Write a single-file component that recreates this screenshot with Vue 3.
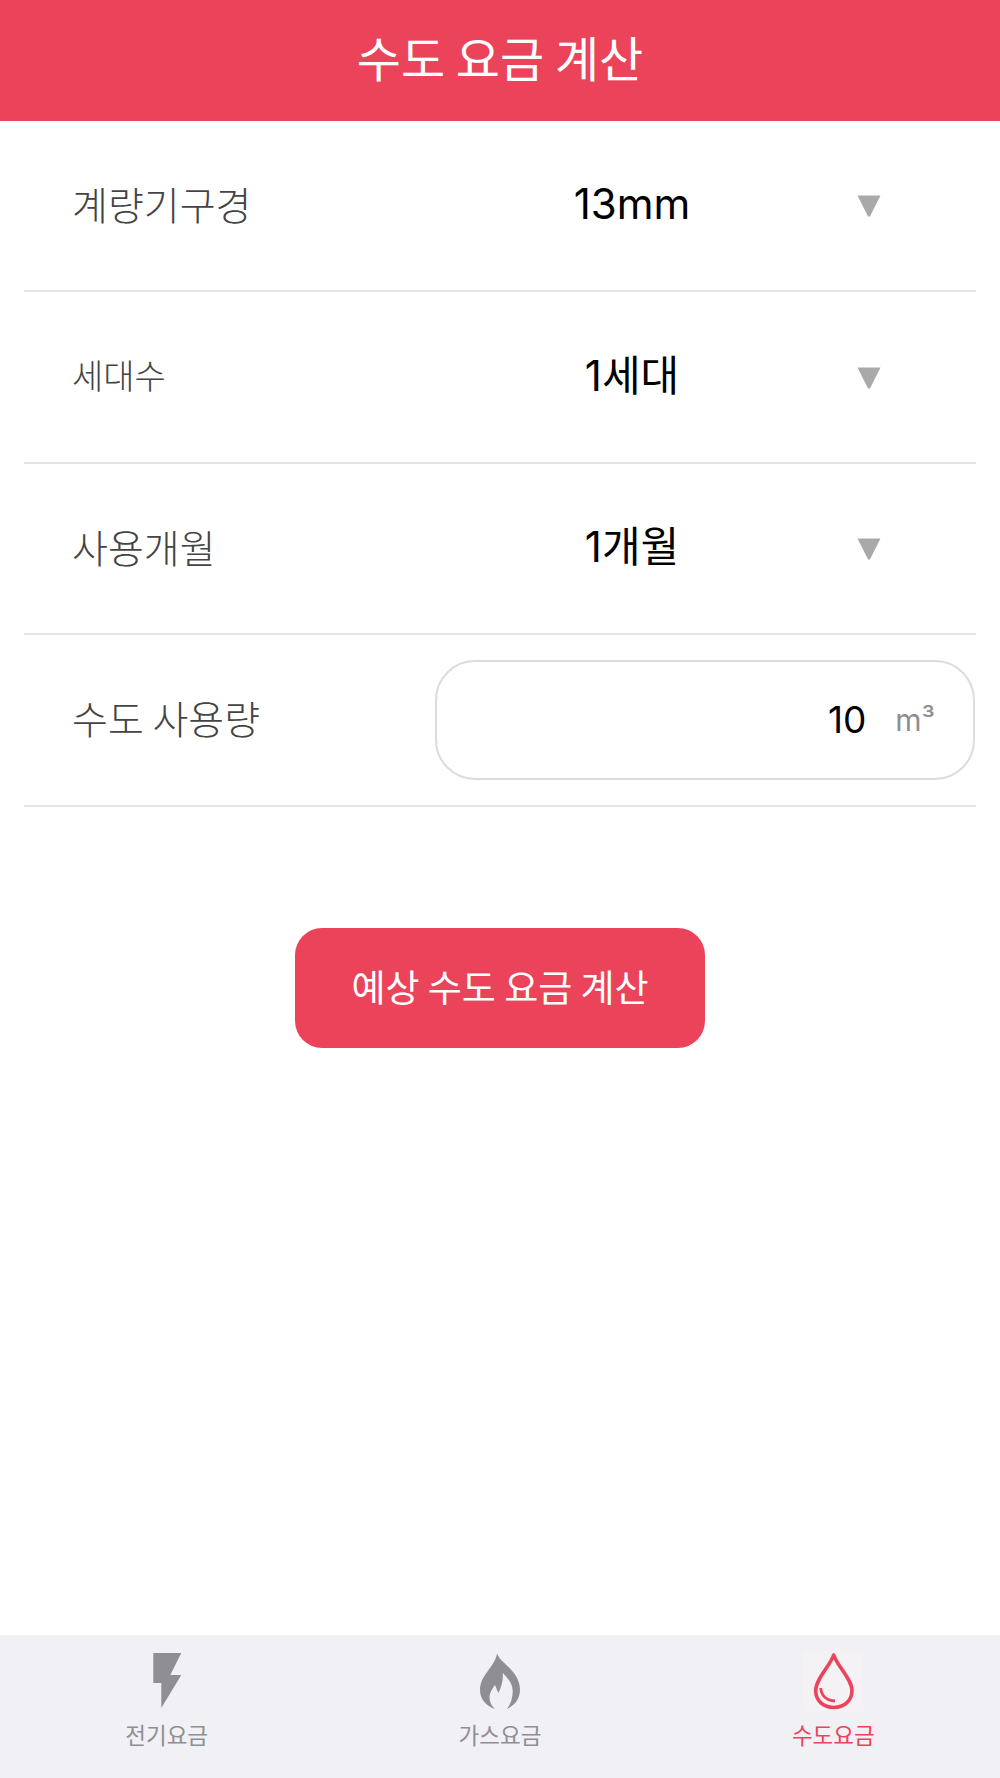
<script setup>
const rows = [
  { label: '계량기구경', value: '13mm', small: false },
  { label: '세대수', value: '1세대', small: true },
  { label: '사용개월', value: '1개월', small: false },
]
</script>

<template>
  <div class="page">
    <header class="header">수도 요금 계산</header>
    <main class="form">
      <div v-for="r in rows" :key="r.label" class="row">
        <div class="label" :class="{ small: r.small }">{{ r.label }}</div>
        <div class="value">{{ r.value }}</div>
        <svg class="arrow" viewBox="0 0 24 22" width="24" height="22"><path d="M0.5 0.5 L23.5 0.5 L13.2 21 Q12 22.5 10.8 21 Z" fill="#a9a9a9" /></svg>
      </div>
      <div class="row input-row">
        <div class="label">수도 사용량</div>
        <div class="input"><span class="num">10</span><span class="unit">m³</span></div>
      </div>
    </main>
    <div class="action"><button class="btn">예상 수도 요금 계산</button></div>
    <nav class="tabs">
      <div class="tab">
        <svg class="icon" viewBox="0 0 60 64" width="60" height="64"><path d="M16.3 2 L44.3 2 L33.3 24 L44.3 24 L24.3 57 L24.3 32 L16.3 32 Z" fill="#8e8e93" /></svg>
        <span>전기요금</span>
      </div>
      <div class="tab">
        <svg class="icon" viewBox="0 0 60 64" width="60" height="64"><path d="M27 2.5 C30 12 50 20 50 39 C50 48 44 55 36.7 58 C40.5 54 42.7 47 42.7 40 C42.7 33 38 27 32.7 22 C33.5 30 31 37 28.3 42 L25 34 C22 38 19.5 42 19.5 46 C19.5 51 21.5 55 25 58 C16 55 10 48 10 39 C10 24 25 16 27 2.5 Z" fill="#8e8e93" /></svg>
        <span>가스요금</span>
      </div>
      <div class="tab active">
        <svg class="icon drop-bg" viewBox="0 0 60 60" width="60" height="60">
          <path d="M30.7 4 C34 15 49 28 49 39.5 C49 50 41 56.5 30.7 56.5 C20.5 56.5 12.7 50 12.7 39.5 C12.7 28 27 15 30.7 4 Z" fill="none" stroke="#ec445c" stroke-width="3.6" stroke-linejoin="round" />
          <path d="M17.8 37 C18 44 23 49.5 32 50" fill="none" stroke="#ec445c" stroke-width="2.8" />
        </svg>
        <span class="active-label">수도요금</span>
      </div>
    </nav>
  </div>
</template>

<style scoped>
.page {
  width: 1000px;
  height: 1778px;
  display: flex;
  flex-direction: column;
  background: #fff;
  font-family: "Noto Sans CJK KR", "Noto Sans", sans-serif;
  overflow: hidden;
}
.header {
  height: 120.5px;
  flex: none;
  background: #eb435a;
  color: #fff;
  font-size: 48px;
  font-weight: 400;
  display: flex;
  align-items: center;
  justify-content: center;
  box-sizing: border-box;
  padding-bottom: 8px;
}
.form { padding: 0 24px; flex: none; }
.row {
  height: 171.5px;
  box-sizing: border-box;
  border-bottom: 2.5px solid #e4e4e6;
  display: flex;
  align-items: center;
  padding-left: 48px;
}
.label {
  width: 363px;
  flex: none;
  font-size: 39px;
  font-weight: 300;
  color: #444;
  margin-bottom: 5px;
}
.label.small { font-size: 34px; }
.value {
  width: 394px;
  flex: none;
  text-align: center;
  font-family: Inter, "Noto Sans CJK KR", sans-serif;
  font-size: 42px;
  line-height: 50px;
  font-weight: 400;
  color: #000;
  margin-bottom: 2px;
}
.arrow { margin-left: 28px; margin-top: 2px; flex: none; }
.input {
  width: 540px;
  height: 120px;
  box-sizing: border-box;
  border: 2.5px solid #dcdcdc;
  border-radius: 40px;
  display: flex;
  align-items: center;
  justify-content: flex-end;
  padding-right: 38px;
}
.num { font-family: Inter, sans-serif; font-size: 37px; color: #000; }
.unit { font-family: Inter, sans-serif; font-size: 30px; color: #8e8e93; margin-left: 29px; }
.action { display: flex; justify-content: center; padding-top: 121.5px; flex: 1; }
.btn {
  width: 410px;
  height: 120px;
  border: none;
  border-radius: 27px;
  background: #eb435a;
  color: #fff;
  font-family: inherit;
  font-size: 37px;
  font-weight: 400;
  padding: 0 0 5px;
}
.tabs {
  height: 143px;
  flex: none;
  background: #f1f0f5;
  display: grid;
  grid-template-columns: repeat(3, 1fr);
}
.tab {
  display: flex;
  flex-direction: column;
  align-items: center;
  padding-top: 16px;
  color: #8e8e93;
  font-size: 22.5px;
  font-weight: 400;
}
.tab span { margin-top: 1px; line-height: 36px; }
.tab span.active-label { margin-top: 5px; }
.tab.active { color: #eb435a; }
.drop-bg { background: #f4f2f5; }
</style>
